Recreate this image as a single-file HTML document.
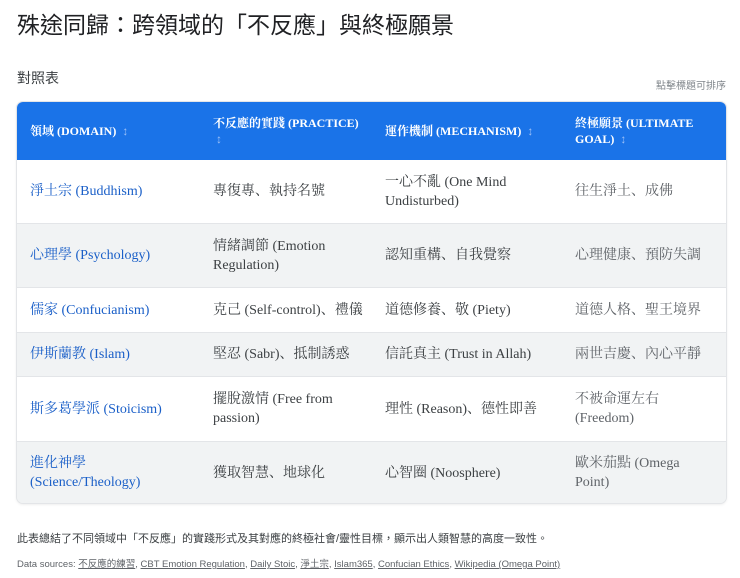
<!DOCTYPE html>
<html><head><meta charset="utf-8"><style>
body{margin:0;background:#fff;font-family:"Liberation Sans","Noto Sans CJK TC",sans-serif;color:#202124;}
h1{position:absolute;left:17px;top:8px;margin:0;font-size:23px;font-weight:400;line-height:34px;}
.sub{position:absolute;left:17px;top:68px;font-size:14px;color:#3c4043;}
.hint{position:absolute;right:14px;top:77px;font-size:10px;color:#80868b;}
.tbl{position:absolute;left:17px;top:102px;width:709px;height:401px;border-radius:6px;overflow:hidden;box-shadow:0 0 0 1px #e3e5e8,0 1px 3px rgba(0,0,0,.12);font-family:"Liberation Serif","Noto Serif CJK SC",serif;}
.r{position:absolute;left:0;width:709px;}
.c{position:absolute;top:0;height:100%;display:flex;align-items:center;font-size:14px;line-height:19px;color:#3c4043;}
.c>div{display:block}
.h{background:#1a73e8;}
.h .c{color:#fff;font-size:12px;font-weight:bold;line-height:16px;}
.h .c span.a{color:#9ec1f7;font-weight:normal}
.g{background:#f1f3f4;border-top:1px solid #e3e5e8;border-bottom:1px solid #e3e5e8;}
.c1{left:13px;width:170px;color:#1a5fc8;}
.c2{left:196px;width:160px;}
.c3{left:368px;width:180px;}
.c4{left:558px;width:140px;color:#5f6368;}
.h .c1,.h .c2,.h .c3,.h .c4{color:#fff}
.note{position:absolute;left:17px;top:530px;font-size:11px;color:#3c4043;}
.src{position:absolute;left:17px;top:556px;font-size:9.5px;color:#5f6368;}
.src u{color:#5f6368}
</style></head><body>
<h1>殊途同歸：跨領域的「不反應」與終極願景</h1>
<div class="sub">對照表</div>
<div class="hint">點擊標題可排序</div>
<div class="tbl">
<div class="r h" style="top:0;height:58px">
<div class="c c1"><div>領域 (DOMAIN) <span class="a">&nbsp;↕</span></div></div>
<div class="c c2" style="width:150px"><div>不反應的實踐 (PRACTICE) <span class="a">&nbsp;↕</span></div></div>
<div class="c c3"><div>運作機制 (MECHANISM) <span class="a">&nbsp;↕</span></div></div>
<div class="c c4" style="width:130px"><div>終極願景 (ULTIMATE GOAL) <span class="a">&nbsp;↕</span></div></div>
</div>
<div class="r" style="top:58px;height:63px">
<div class="c c1">淨土宗 (Buddhism)</div><div class="c c2">專復專、執持名號</div><div class="c c3" style="width:150px"><div>一心不亂 (One Mind Undisturbed)</div></div><div class="c c4">往生淨土、成佛</div></div>
<div class="r g" style="top:121px;height:63px">
<div class="c c1">心理學 (Psychology)</div><div class="c c2" style="width:140px"><div>情緒調節 (Emotion Regulation)</div></div><div class="c c3">認知重構、自我覺察</div><div class="c c4">心理健康、預防失調</div></div>
<div class="r" style="top:186px;height:44px">
<div class="c c1">儒家 (Confucianism)</div><div class="c c2">克己 (Self-control)、禮儀</div><div class="c c3">道德修養、敬 (Piety)</div><div class="c c4">道德人格、聖王境界</div></div>
<div class="r g" style="top:230px;height:43px">
<div class="c c1">伊斯蘭教 (Islam)</div><div class="c c2">堅忍 (Sabr)、抵制誘惑</div><div class="c c3">信託真主 (Trust in Allah)</div><div class="c c4">兩世吉慶、內心平靜</div></div>
<div class="r" style="top:275px;height:64px">
<div class="c c1">斯多葛學派 (Stoicism)</div><div class="c c2" style="width:140px"><div>擺脫激情 (Free from passion)</div></div><div class="c c3">理性 (Reason)、德性即善</div><div class="c c4"><div>不被命運左右 (Freedom)</div></div></div>
<div class="r g" style="top:339px;height:62px;border-bottom:none">
<div class="c c1" style="width:140px"><div>進化神學 (Science/Theology)</div></div><div class="c c2">獲取智慧、地球化</div><div class="c c3">心智圈 (Noosphere)</div><div class="c c4"><div>歐米茄點 (Omega Point)</div></div></div>
</div>
<div class="note">此表總結了不同領域中「不反應」的實踐形式及其對應的終極社會/靈性目標，顯示出人類智慧的高度一致性。</div>
<div class="src">Data sources: <u>不反應的練習</u>, <u>CBT Emotion Regulation</u>, <u>Daily Stoic</u>, <u>淨土宗</u>, <u>Islam365</u>, <u>Confucian Ethics</u>, <u>Wikipedia (Omega Point)</u></div>
</body></html>
